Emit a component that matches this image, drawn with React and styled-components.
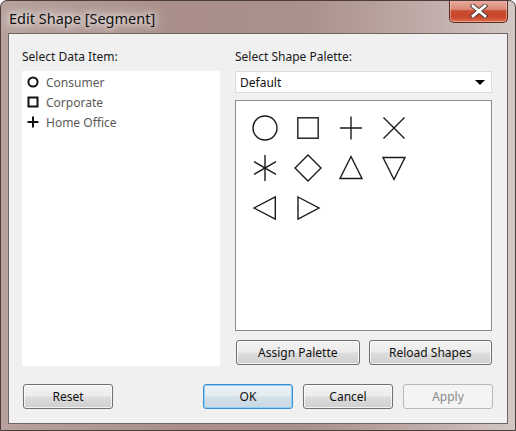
import React from "react";
import styled, { createGlobalStyle } from "styled-components";

const Global = createGlobalStyle`
  html, body { margin: 0; padding: 0; background: #ffffff; }
  body { font-family: "Noto Sans", "Open Sans", sans-serif; }
  * { box-sizing: border-box; }
`;

const Window = styled.div`
  width: 516px;
  height: 431px;
  border: 1px solid #4b3d3a;
  border-radius: 7px 7px 0 0;
  background: linear-gradient(90deg, #b7a29d 0%, #a98e89 35%, #ab918c 60%, #c2afab 85%, #d3c7c4 100%);
  padding: 0 7px 6px 7px;
  display: flex;
  flex-direction: column;
  overflow: hidden;
`;

const TitleBar = styled.div`
  height: 32px;
  display: flex;
  align-items: flex-start;
  justify-content: space-between;
  flex: none;
`;

const Title = styled.div`
  margin-top: 7px;
  padding-left: 1px;
  font-size: 14.5px;
  line-height: 20px;
  color: #111;
  text-shadow: 0 0 6px rgba(255,255,255,0.95), 0 0 12px rgba(255,255,255,0.85), 0 0 18px rgba(255,255,255,0.7);
`;

const CloseButton = styled.div`
  width: 59px;
  height: 23px;
  margin-top: -1px;
  border: 1px solid #5b2d25;
  border-top: none;
  border-radius: 0 0 5px 5px;
  background: linear-gradient(180deg, #e9aea2 0%, #dc8a77 42%, #c84a31 50%, #c9472d 78%, #e0704e 100%);
  box-shadow: inset 0 0 0 1px rgba(255,220,210,0.45);
  display: flex;
  align-items: center;
  justify-content: center;
`;

const Client = styled.div`
  flex: 1;
  border: 1px solid #6f6663;
  background: #f0f0f0;
  padding: 13px 14px 0 13px;
  display: flex;
  flex-direction: column;
`;

const Columns = styled.div`
  display: grid;
  grid-template-columns: 198px 257px;
  column-gap: 15px;
`;

const Column = styled.div`
  display: flex;
  flex-direction: column;
`;

const Label = styled.div`
  height: 24px;
  line-height: 20px;
  font-size: 12px;
  color: #1a1a1a;
`;

const ListBox = styled.div`
  height: 295px;
  background: #ffffff;
  padding: 1px 0 0 5px;
`;

const ListRow = styled.div`
  height: 20px;
  display: flex;
  align-items: center;
  gap: 7px;
  font-size: 12px;
  color: #5a5a5a;
`;

const Dropdown = styled.div`
  height: 22px;
  border: 1px solid #dcdcdc;
  background: #ffffff;
  display: flex;
  align-items: center;
  justify-content: space-between;
  padding: 0 5px 0 4px;
  font-size: 12px;
  color: #111;
`;

const Arrow = styled.div`
  width: 0;
  height: 0;
  border-left: 5px solid transparent;
  border-right: 5px solid transparent;
  border-top: 5px solid #000;
  margin-right: 1px;
`;

const ShapeBox = styled.div`
  margin-top: 7px;
  height: 231px;
  border: 1px solid #878b92;
  background: #ffffff;
  padding: 7px 0 0 7px;
  display: grid;
  grid-template-columns: repeat(4, 43px);
  grid-auto-rows: 40px;
  align-content: start;
`;

const ShapeCell = styled.div`
  display: flex;
  align-items: center;
  justify-content: center;
`;

const ButtonRow = styled.div`
  margin-top: 9px;
  padding-left: 1px;
  display: flex;
  gap: 9px;
`;

const Button = styled.div`
  flex: ${(p) => (p.$grow ? 1 : "none")};
  width: ${(p) => (p.$grow ? "auto" : "90px")};
  height: 25px;
  border-radius: 3px;
  border: 1px solid ${(p) => (p.$default ? "#3c8fd4" : p.$disabled ? "#b5b9bc" : "#707070")};
  background: ${(p) =>
    p.$disabled
      ? "#f4f4f4"
      : p.$default
      ? "linear-gradient(180deg, #edf2f5 0%, #e3ebf0 48%, #d3e0e8 52%, #c9d8e2 100%)"
      : "linear-gradient(180deg, #f2f2f2 0%, #ebebeb 48%, #dddddd 52%, #cfcfcf 100%)"};
  box-shadow: ${(p) =>
    p.$default
      ? "inset 0 0 0 1px #8ed0f7"
      : p.$disabled
      ? "none"
      : "inset 0 0 0 1px rgba(255,255,255,0.75)"};
  display: flex;
  align-items: center;
  justify-content: center;
  font-size: 12px;
  color: ${(p) => (p.$disabled ? "#8a8a8a" : "#111")};
`;

const Footer = styled.div`
  margin-top: 18px;
  display: flex;
  justify-content: space-between;
  padding-left: 1px;
`;

const ButtonGroup = styled.div`
  display: flex;
  gap: 10px;
`;

const S = { fill: "none", stroke: "#1a1a1a", strokeWidth: 1.4 };

const shapes = [
  <circle cx="15" cy="15" r="12" {...S} />,
  <rect x="4.8" y="4.8" width="20.4" height="20.4" {...S} />,
  <path d="M4 15 H26 M15 3.5 V26.5" {...S} />,
  <path d="M4.5 4.5 L25.5 25.5 M25.5 4.5 L4.5 25.5" {...S} />,
  <path d="M15 2 V28 M4 8.6 L26 21.4 M4 21.4 L26 8.6" {...S} />,
  <path d="M15 2 L28 15 L15 28 L2 15 Z" {...S} />,
  <path d="M15 3.5 L26 25.5 L4 25.5 Z" {...S} />,
  <path d="M4 4.5 L26 4.5 L15 26.5 Z" {...S} />,
  <path d="M4 15 L25.3 4 L25.3 26 Z" {...S} />,
  <path d="M5 4 L26 15 L5 26 Z" {...S} />,
];

const B = { fill: "none", stroke: "#111", strokeWidth: 2 };

const items = [
  { name: "Consumer", icon: <circle cx="6" cy="6" r="4.6" {...B} /> },
  { name: "Corporate", icon: <rect x="1.5" y="1.5" width="9" height="9" {...B} /> },
  { name: "Home Office", icon: <path d="M0.5 6 H11.5 M6 0.5 V11.5" {...B} /> },
];

export default function App() {
  return (
    <>
      <Global />
      <Window>
        <TitleBar>
          <Title>Edit Shape [Segment]</Title>
          <CloseButton>
            <svg width="18" height="14" viewBox="0 0 18 14">
              <path d="M3 2 L15 12 M15 2 L3 12" stroke="#4a3a38" strokeWidth="4.6" strokeLinecap="square" />
              <path d="M3 2 L15 12 M15 2 L3 12" stroke="#ffffff" strokeWidth="2.8" strokeLinecap="square" />
            </svg>
          </CloseButton>
        </TitleBar>
        <Client>
          <Columns>
            <Column>
              <Label>Select Data Item:</Label>
              <ListBox>
                {items.map((it) => (
                  <ListRow key={it.name}>
                    <svg width="12" height="12" viewBox="0 0 12 12">{it.icon}</svg>
                    {it.name}
                  </ListRow>
                ))}
              </ListBox>
            </Column>
            <Column>
              <Label>Select Shape Palette:</Label>
              <Dropdown>
                Default
                <Arrow />
              </Dropdown>
              <ShapeBox>
                {shapes.map((s, i) => (
                  <ShapeCell key={i}>
                    <svg width="30" height="30" viewBox="0 0 30 30">{s}</svg>
                  </ShapeCell>
                ))}
              </ShapeBox>
              <ButtonRow>
                <Button $grow>Assign Palette</Button>
                <Button $grow>Reload Shapes</Button>
              </ButtonRow>
            </Column>
          </Columns>
          <Footer>
            <Button>Reset</Button>
            <ButtonGroup>
              <Button $default>OK</Button>
              <Button>Cancel</Button>
              <Button $disabled>Apply</Button>
            </ButtonGroup>
          </Footer>
        </Client>
      </Window>
    </>
  );
}
